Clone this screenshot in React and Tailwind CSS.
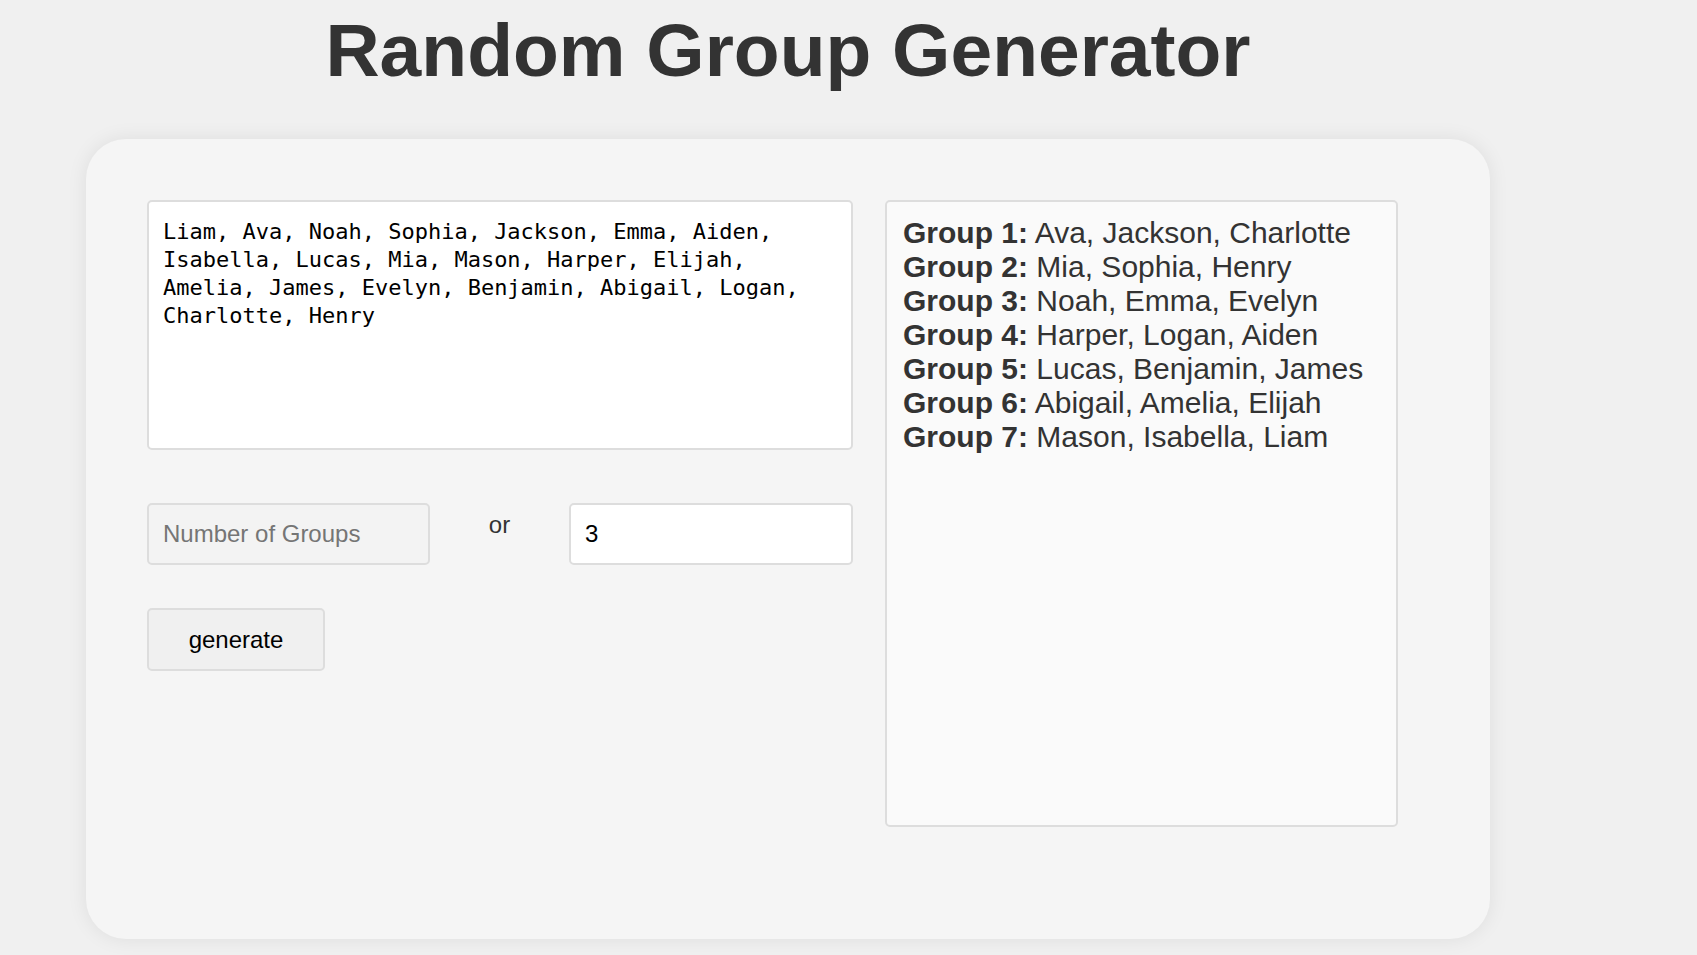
import { useState } from "react";

const names =
  "Liam, Ava, Noah, Sophia, Jackson, Emma, Aiden, Isabella, Lucas, Mia, Mason, Harper, Elijah, Amelia, James, Evelyn, Benjamin, Abigail, Logan, Charlotte, Henry";

const groups = [
  ["Ava", "Jackson", "Charlotte"],
  ["Mia", "Sophia", "Henry"],
  ["Noah", "Emma", "Evelyn"],
  ["Harper", "Logan", "Aiden"],
  ["Lucas", "Benjamin", "James"],
  ["Abigail", "Amelia", "Elijah"],
  ["Mason", "Isabella", "Liam"],
];

const App = () => {
  const [list, setList] = useState(names);
  const [count, setCount] = useState("");
  const [size, setSize] = useState("3");

  return (
    <div className="min-h-screen bg-[#f0f0f0] font-['Liberation_Sans',Arial,sans-serif]">
      <div className="ml-[86px] w-[1404px]">
        <h1 className="pt-[13px] mb-[51px] text-center text-[75px] leading-none font-bold text-[#333]">
          Random Group Generator
        </h1>

        <div className="flex gap-[32px] rounded-[40px] bg-[#f5f5f5] pl-[61px] pt-[61px] pb-[112px] shadow-[0_0_20px_rgba(0,0,0,0.08)]">
          <div className="w-[706px] flex flex-col">
            <textarea
              className="h-[250px] w-full resize-none rounded-[5px] border-2 border-[#dddddd] bg-white px-[14px] pt-[16px] pb-[14px] font-['DejaVu_Sans_Mono',monospace] text-[22px] leading-[28px] text-black outline-none"
              value={list}
              onChange={(e) => setList(e.target.value)}
            />

            <div className="mt-[53px] flex justify-between">
              <input
                className="h-[62px] w-[283px] rounded-[5px] border-2 border-[#dddddd] bg-[#f3f3f3] px-[14px] text-[24px] text-black outline-none placeholder:text-[#757575]"
                placeholder="Number of Groups"
                value={count}
                onChange={(e) => setCount(e.target.value)}
              />
              <span className="mt-[4px] text-[24px] text-[#333]">or</span>
              <input
                className="h-[62px] w-[284px] rounded-[5px] border-2 border-[#dddddd] bg-white px-[14px] text-[24px] text-black outline-none"
                value={size}
                onChange={(e) => setSize(e.target.value)}
              />
            </div>

            <div className="mt-[43px]">
              <button className="h-[63px] w-[178px] rounded-[5px] border-2 border-[#dddddd] bg-[#f0f0f0] text-[24px] text-black">
                generate
              </button>
            </div>
          </div>

          <div className="h-[627px] w-[513px] rounded-[5px] border-2 border-[#dddddd] bg-[#fafafa] px-4 pt-[14px] text-[30px] leading-[34px] text-[#333]">
            {groups.map((g, i) => (
              <div key={i}>
                <span className="font-bold">Group {i + 1}:</span> {g.join(", ")}
              </div>
            ))}
          </div>
        </div>
      </div>
    </div>
  );
};

export default App;
